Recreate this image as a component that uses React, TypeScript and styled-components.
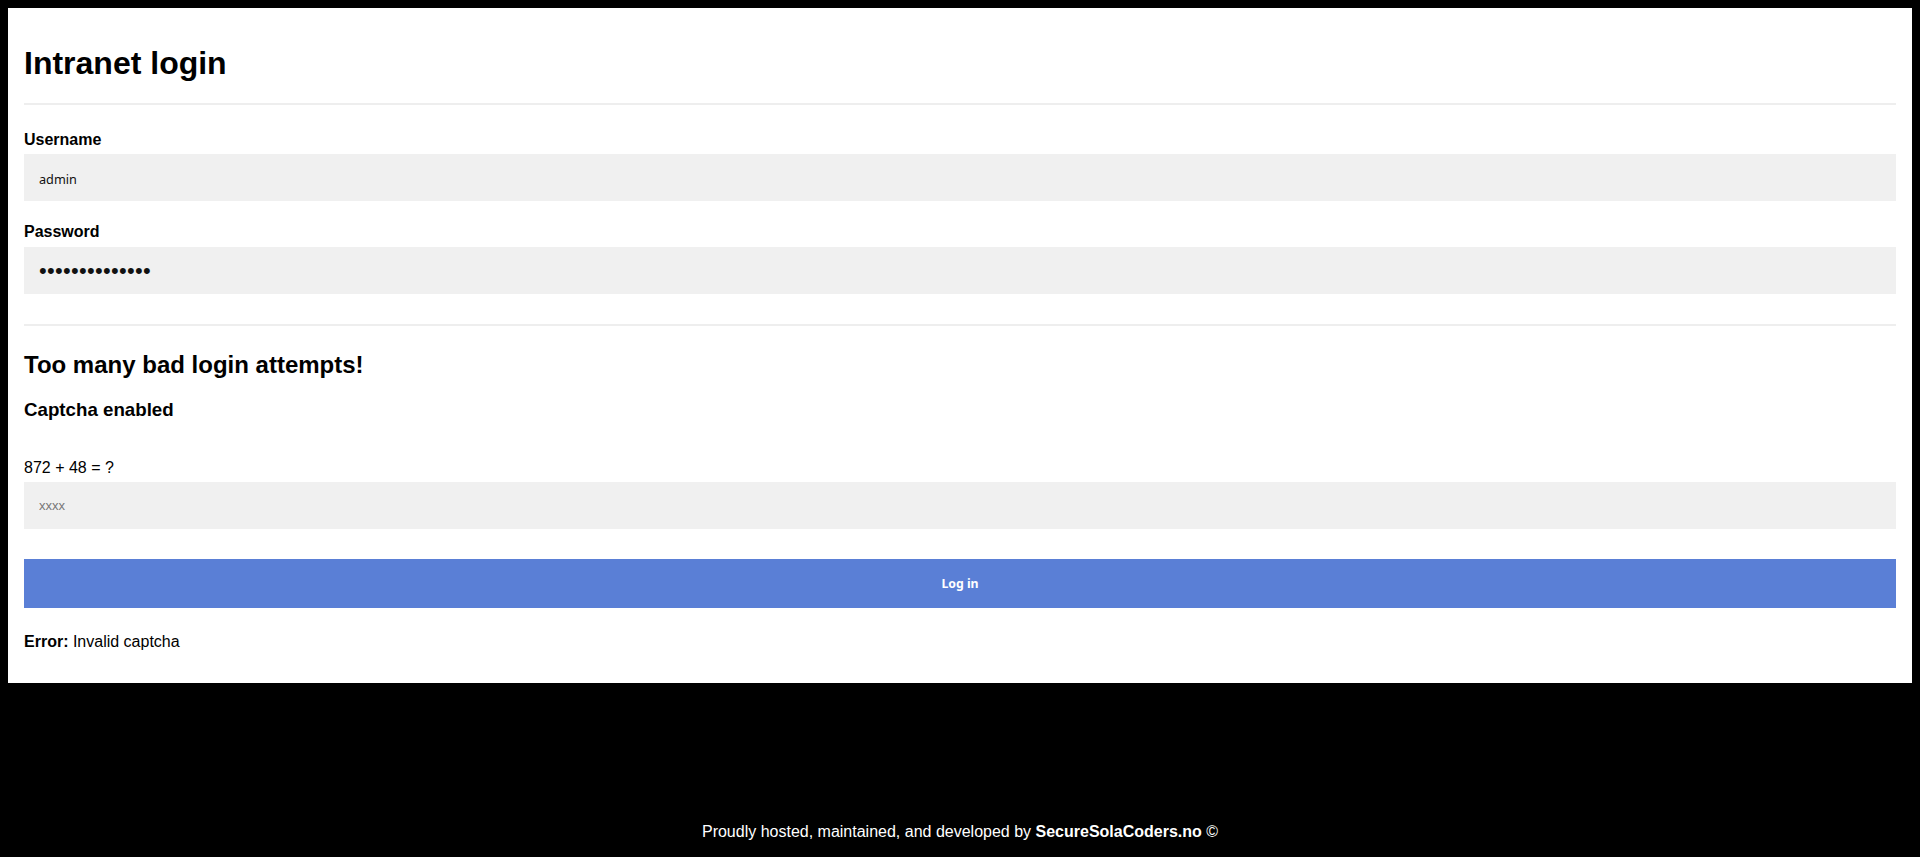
import React from "react";
import styled, { createGlobalStyle } from "styled-components";

const GlobalStyle = createGlobalStyle`
  html, body {
    margin: 0;
    padding: 0;
    background: #000;
    font-family: "Liberation Sans", Arial, Helvetica, sans-serif;
    color: #000;
  }
  * { box-sizing: border-box; }
`;

const Page = styled.div`
  min-height: 100vh;
  display: flex;
  flex-direction: column;
  padding: 8px 8px 8px;
`;

const Card = styled.main`
  background: #fff;
  padding: 16px 16px 32px;
  display: flex;
  flex-direction: column;
`;

const Title = styled.h1`
  font-size: 32px;
  font-weight: 700;
  line-height: 37px;
  margin: 21px 0 0;
`;

const Divider = styled.hr<{ $gap: number }>`
  border: none;
  height: 2px;
  background: #eeeeee;
  margin: ${(p) => p.$gap}px 0 0;
`;

const Label = styled.label<{ $gap: number }>`
  display: block;
  font-size: 16px;
  font-weight: 700;
  line-height: 18px;
  margin-top: ${(p) => p.$gap}px;
`;

const Field = styled.input<{ $gap: number; $secret?: boolean; $plain?: boolean }>`
  display: block;
  width: 100%;
  height: 47px;
  margin-top: ${(p) => p.$gap}px;
  border: none;
  outline: none;
  background: #f0f0f0;
  padding: ${(p) => (p.$secret || p.$plain ? "0 15px" : "2px 15px 0")};
  color: #111;
  font-family: ${(p) =>
    p.$secret || p.$plain ? `"Liberation Sans", Arial, sans-serif` : `"Noto Sans", sans-serif`};
  font-size: ${(p) => (p.$secret ? "22px" : p.$plain ? "13px" : "12.7px")};
  letter-spacing: ${(p) => (p.$secret ? "0.3px" : "normal")};
  &::placeholder {
    color: #777;
  }
`;

const Warning = styled.h2`
  font-size: 24px;
  font-weight: 700;
  line-height: 28px;
  margin: 25px 0 0;
`;

const SubTitle = styled.h3`
  font-size: 18.72px;
  font-weight: 700;
  line-height: 22px;
  margin: 20px 0 0;
`;

const Question = styled.p`
  font-size: 16px;
  line-height: 18px;
  margin: 38px 0 0;
`;

const SubmitButton = styled.button`
  display: block;
  width: 100%;
  height: 49px;
  margin-top: 30px;
  border: none;
  background: #5a7fd6;
  color: #fff;
  font-family: "Noto Sans", sans-serif;
  font-size: 12.3px;
  font-weight: 700;
  cursor: pointer;
`;

const ErrorLine = styled.p`
  font-size: 16px;
  line-height: 18px;
  margin: 25px 0 0;
  strong {
    font-weight: 700;
  }
`;

const Footer = styled.footer`
  margin-top: auto;
  padding: 16px 0 8px;
  text-align: center;
  color: #fff;
  font-size: 16px;
  line-height: 18px;
  strong {
    font-weight: 700;
  }
`;

export default function App() {
  return (
    <>
      <GlobalStyle />
      <Page>
        <Card>
          <Title>Intranet login</Title>
          <Divider $gap={21} />
          <Label $gap={26} htmlFor="username">Username</Label>
          <Field $gap={5} id="username" type="text" defaultValue="admin" />
          <Label $gap={22} htmlFor="password">Password</Label>
          <Field $gap={6} $secret id="password" type="password" defaultValue="xxxxxxxxxxxxxx" />
          <Divider $gap={30} />
          <Warning>Too many bad login attempts!</Warning>
          <SubTitle>Captcha enabled</SubTitle>
          <Question>872 + 48 = ?</Question>
          <Field $gap={5} $plain type="text" placeholder="xxxx" />
          <SubmitButton type="button">Log in</SubmitButton>
          <ErrorLine>
            <strong>Error:</strong> Invalid captcha
          </ErrorLine>
        </Card>
        <Footer>
          Proudly hosted, maintained, and developed by <strong>SecureSolaCoders.no</strong> ©
        </Footer>
      </Page>
    </>
  );
}
